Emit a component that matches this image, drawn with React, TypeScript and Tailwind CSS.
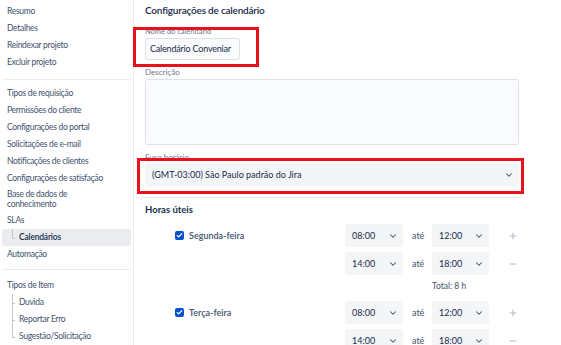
import React from "react";
import { ChevronDown, Plus, Minus, Check } from "lucide-react";

const font = { fontFamily: 'Lato, "Noto Sans", sans-serif' };

function SideItem({ children }: { children: React.ReactNode }) {
  return (
    <div className="h-[17.25px] flex items-center pl-[5px] text-[8.5px] tracking-[-0.3px] text-[#42526e] whitespace-nowrap">
      {children}
    </div>
  );
}

function TreeItem({ children, last }: { children: React.ReactNode; last?: boolean }) {
  return (
    <div className="relative h-[17px] flex items-center pl-[19px] text-[8.5px] tracking-[-0.3px] text-[#42526e] whitespace-nowrap">
      <span className={`absolute left-[12px] top-0 w-px bg-[#c1c7d0] ${last ? "h-[9px]" : "h-full"}`} />
      <span className="absolute left-[12px] top-[8.5px] w-[3px] h-px bg-[#c1c7d0]" />
      {children}
    </div>
  );
}

function TimeSelect({ value }: { value: string }) {
  return (
    <div className="h-[23px] rounded-[2px] bg-[#f4f5f7] flex items-center justify-between pl-[7px] pr-[5px] text-[9px] text-[#172b4d]">
      <span>{value}</span>
      <ChevronDown size={10} strokeWidth={2.5} color="#42526e" />
    </div>
  );
}

function TimeRow({ label, from, to, plus }: { label?: string; from: string; to: string; plus?: boolean }) {
  return (
    <div className="flex items-center h-[23px]">
      <div className="w-[200px] flex items-center pl-[30px]">
        {label && (
          <>
            <span className="w-[9px] h-[9px] shrink-0 rounded-[2px] bg-[#0052cc] flex items-center justify-center">
              <Check size={7} strokeWidth={4} color="#fff" />
            </span>
            <span className="ml-[5px] text-[9px] font-semibold text-[#42526e]">{label}</span>
          </>
        )}
      </div>
      <div className="w-[58px]">
        <TimeSelect value={from} />
      </div>
      <div className="w-[29px] pl-[9px] text-[9px] text-[#42526e]">até</div>
      <div className="w-[57px]">
        <TimeSelect value={to} />
      </div>
      <div className="ml-[19px] text-[#8993a4]">
        {plus ? <Plus size={10} strokeWidth={1.5} /> : <Minus size={10} strokeWidth={1.5} />}
      </div>
    </div>
  );
}

export default function App() {
  return (
    <div className="w-[561px] h-[345px] overflow-hidden bg-white flex" style={font}>
      {/* Sidebar */}
      <div className="w-[134px] shrink-0 border-r border-[#ebecf0] pt-[3px] px-[2px] flex flex-col">
        <SideItem>Resumo</SideItem>
        <SideItem>Detalhes</SideItem>
        <SideItem>Reindexar projeto</SideItem>
        <SideItem>Excluir projeto</SideItem>
        <div className="mt-[8px] h-px bg-[#ebecf0]" />
        <div className="mt-[5px]" />
        <SideItem>Tipos de requisição</SideItem>
        <SideItem>Permissões do cliente</SideItem>
        <SideItem>Configurações do portal</SideItem>
        <SideItem>Solicitações de e-mail</SideItem>
        <SideItem>Notificações de clientes</SideItem>
        <SideItem>Configurações de satisfação</SideItem>
        <div className="py-[3px] pl-[5px] text-[8.5px] tracking-[-0.3px] leading-[10px] text-[#42526e]">
          Base de dados de
          <br />
          conhecimento
        </div>
        <SideItem>SLAs</SideItem>
        <div className="relative h-[17.25px] flex items-center pl-[17px] rounded-[3px] bg-[#ebecf0] text-[8.5px] tracking-[-0.2px] font-semibold text-[#172b4d]">
          <span className="absolute left-[10px] top-[0px] w-px h-[9px] bg-[#c1c7d0]" />
          <span className="absolute left-[10px] top-[9px] w-[3px] h-px bg-[#c1c7d0]" />
          Calendários
        </div>
        <SideItem>Automação</SideItem>
        <div className="mt-[6px] h-px bg-[#ebecf0]" />
        <div className="mt-[7px]" />
        <SideItem>Tipos de Item</SideItem>
        <div className="-ml-[2px]">
          <TreeItem>Duvida</TreeItem>
          <TreeItem>Reportar Erro</TreeItem>
          <TreeItem last>Sugestão/Solicitação</TreeItem>
        </div>
      </div>

      {/* Main */}
      <div className="relative flex-1 pl-[11px] pt-[2px]">
        <div className="h-[16px] flex items-center text-[10px] tracking-[-0.2px] font-semibold text-[#172b4d]">
          Configurações de calendário
        </div>
        <div className="mt-[9px] h-[10px] flex items-center text-[7.5px] text-[#6b778c]">Nome do calendário</div>
        <div className="mt-[1px] w-[95px] h-[22px] rounded-[3px] border border-[#dfe1e6] bg-[#fafbfc] flex items-center pl-[4px] text-[9px] tracking-[-0.2px] text-[#172b4d] whitespace-nowrap">
          Calendário Conveniar
        </div>
        <div className="mt-[7px] h-[10px] flex items-center text-[8px] text-[#6b778c]">Descrição</div>
        <div className="mt-[2px] w-[374px] h-[66px] rounded-[3px] border border-[#dfe1e6] bg-[#fafbfc]" />
        <div className="mt-[7px] h-[10px] flex items-center text-[8px] text-[#6b778c]">Fuso horário</div>
        <div className="mt-[1px] w-[374px] h-[23px] rounded-[3px] bg-[#f4f5f7] flex items-center justify-between pl-[7px] pr-[5px] text-[9px] text-[#172b4d]">
          <span>(GMT-03:00) São Paulo padrão do Jira</span>
          <ChevronDown size={10} strokeWidth={2.5} color="#42526e" />
        </div>
        <div className="mt-[11px] -ml-[9px] w-[387px] h-px bg-[#ebecf0]" />
        <div className="mt-[5px] h-[14px] flex items-center text-[9.5px] font-bold text-[#172b4d]">Horas úteis</div>

        <div className="mt-[7px] flex flex-col gap-[5px]">
          <TimeRow label="Segunda-feira" from="08:00" to="12:00" plus />
          <TimeRow from="14:00" to="18:00" />
        </div>
        <div className="mt-[5px] h-[12px] pl-[287px] flex items-center text-[8.5px] text-[#42526e]">Total: 8 h</div>
        <div className="mt-[9px] flex flex-col gap-[5px]">
          <TimeRow label="Terça-feira" from="08:00" to="12:00" plus />
          <TimeRow from="14:00" to="18:00" />
        </div>

        {/* annotation boxes */}
        <div className="absolute left-[-1px] top-[27px] w-[126px] h-[40px] border-[3px] border-[#e8111c]" />
        <div className="absolute left-[3px] top-[158px] w-[387px] h-[36px] border-[3px] border-[#e8111c]" />
      </div>
    </div>
  );
}
